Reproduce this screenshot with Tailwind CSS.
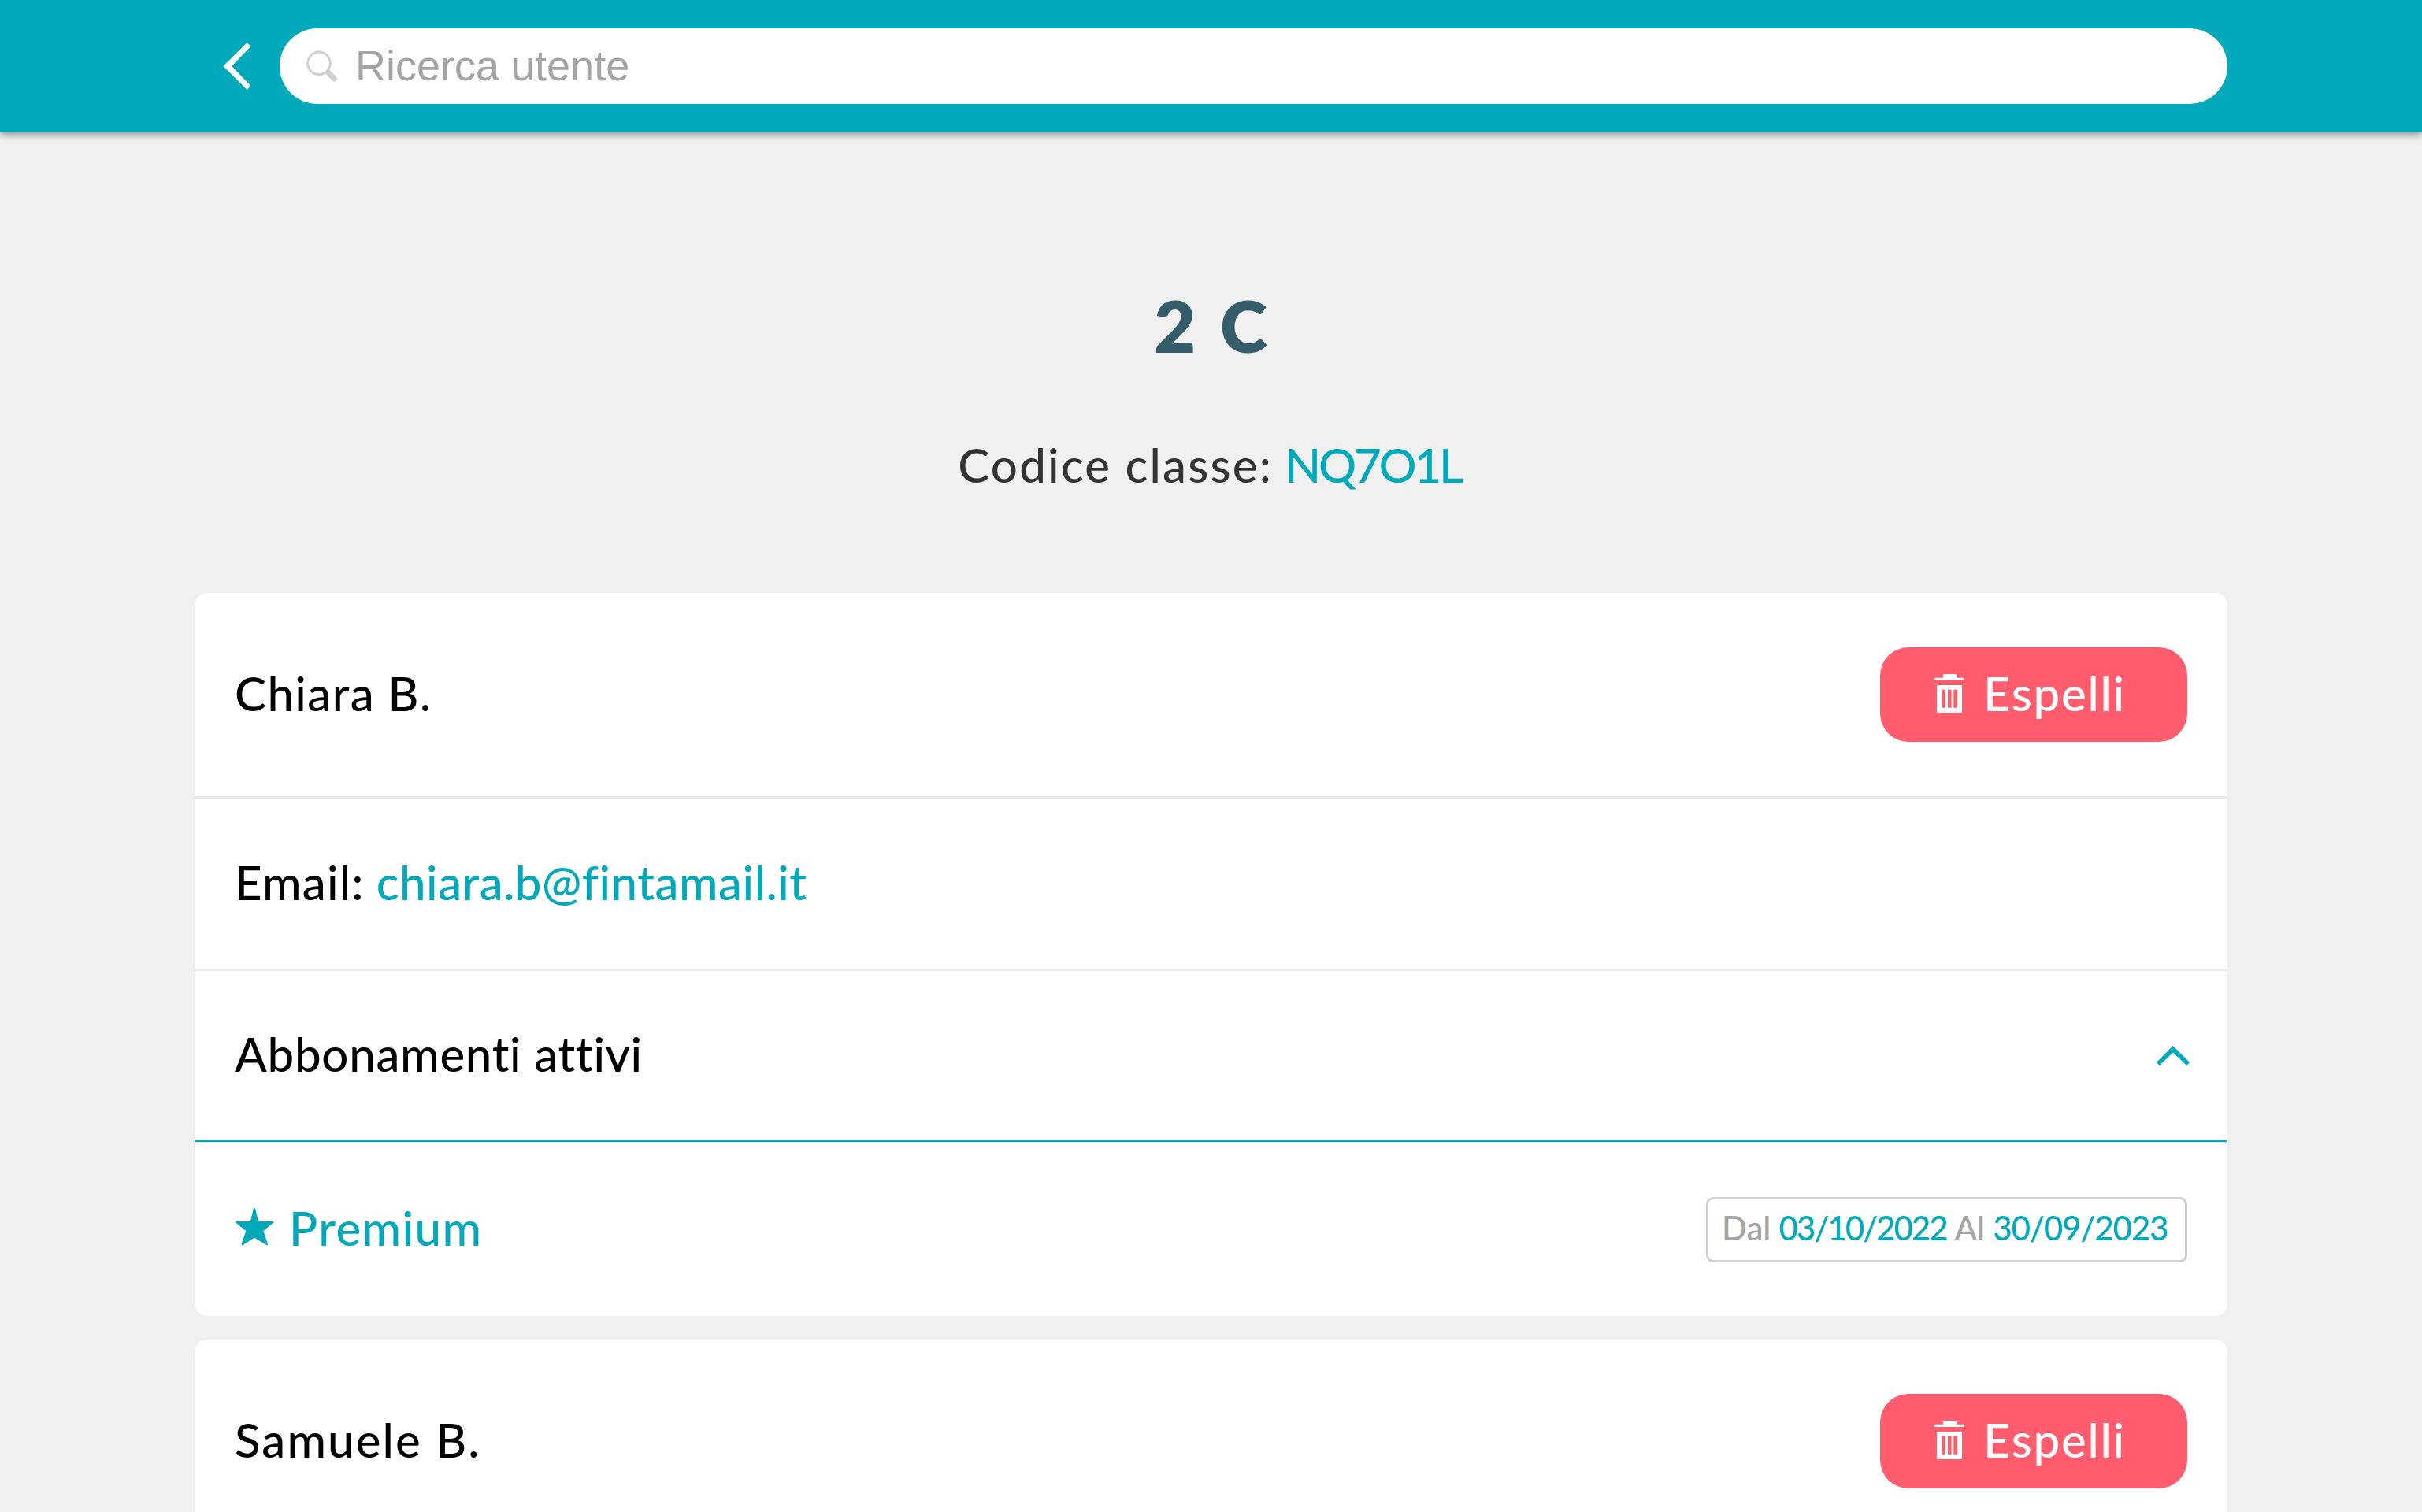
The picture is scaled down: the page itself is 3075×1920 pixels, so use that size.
<!DOCTYPE html>
<html lang="it">
<head>
  <meta charset="UTF-8" />
  <title>2 C - Gestione classe</title>
  <meta name="viewport" content="width=device-width, initial-scale=1.0" />
  <script src="https://cdn.jsdelivr.net/npm/@tailwindcss/browser@4"></script>
</head>
<body class="h-screen overflow-hidden bg-[#f0f0f0] text-black text-[60px] leading-[80px] font-medium font-['Lato',sans-serif] [font-variant-ligatures:none]">

<!-- Top bar -->
<header class="relative h-[168px] bg-[#01a9ba] shadow-[0_3px_9px_rgba(0,0,0,0.4)]">
  <div class="w-[2581px] h-full mx-auto pl-9 flex items-center gap-9">
    <a href="#" class="shrink-0" aria-label="Indietro">
      <svg class="w-9 h-[60px]" viewBox="0 0 108 180" fill="#fff"><path d="M92 0 106 15 34 90 106 165 92 180 1 90z" /></svg>
    </a>
    <label class="flex-1 h-24 rounded-full bg-white flex items-center gap-[22px] pl-[34px]">
      <svg class="w-10 h-10 shrink-0" viewBox="0 0 40 40" fill="none" stroke="#d0d0d0">
        <circle cx="16" cy="16.3" r="14.3" stroke-width="3" />
        <path d="M27.5 27.8 35.5 36" stroke-width="7" stroke-linecap="round" />
      </svg>
      <input type="text" placeholder="Ricerca utente" class="flex-1 h-full pb-[3px] font-normal font-['Liberation_Sans',sans-serif] text-[54px] leading-[62px] placeholder:text-[#a4a4a4] outline-none" />
    </label>
  </div>
</header>

<main class="w-[2581px] mx-auto pt-[195px]">
  <!-- Class title -->
  <h1 class="pl-1 text-center text-[91px] leading-[100px] font-extrabold tracking-[5px] text-[#355c6a]">2 C</h1>
  <p class="mt-[87px] mb-[123px] pr-1 text-center text-[#333]"><span class="tracking-[2.2px]">Codice classe:</span> <a href="#" class="tracking-[-3.2px] text-[#01a9ba]">NQ7O1L</a></p>

  <div class="flex flex-col gap-[30px]">
    <!-- Student card -->
    <section class="rounded-[16px] bg-white overflow-hidden">
      <div class="h-[258px] px-[51px] flex items-center justify-between">
        <span class="pb-1 tracking-[1.4px]">Chiara B.</span>
        <button class="w-[390px] h-[120px] pl-[69px] rounded-[36px] bg-[#ff5c6e] text-white flex items-center gap-6">
          <svg class="w-[38px] h-[49px] shrink-0 -mt-[3px]" viewBox="0 0 114 147" fill="currentColor" fill-rule="evenodd">
            <path d="M33 14V3q0-3 3-3h45q3 0 3 3v11h27q3 0 3 5t-3 5H3q-3 0-3-5t3-5z" />
            <path d="M9 42h96v102q0 3-3 3H12q-3 0-3-3zM28 59v69h14V59zM51 59v69h14V59zM73 59v69h14V59z" />
          </svg>
          <span class="pb-1 tracking-[1.7px]">Espelli</span>
        </button>
      </div>
      <div class="h-[219px] px-[51px] border-t-3 border-[#e7ecec] flex items-center">
        <p class="pb-1"><span class="tracking-[1.2px]">Email:</span> <a href="#" class="tracking-[0.5px] text-[#01a9ba]">chiara.b@fintamail.it</a></p>
      </div>
      <div class="h-[217px] px-[51px] border-t-3 border-[#e7ecec] flex items-center justify-between">
        <span class="pb-1 tracking-[0.7px]">Abbonamenti attivi</span>
        <svg class="w-[42px] h-[25px] -mr-[3px]" viewBox="0 0 125 74" fill="#01a9ba"><path d="M62 0 125 62 114 74 62 25 11 74 0 62z" /></svg>
      </div>
      <div class="h-1 bg-[#01a9ba] border-t border-t-[#9acdd1] border-b border-b-[#c3ebee]"></div>
      <div class="h-[220px] px-[51px] flex items-center justify-between">
        <div class="flex items-center gap-[18px] text-[#01a9ba]">
          <svg class="w-[50px] h-[48px] ml-px -mt-[7px]" viewBox="0 0 150 144" fill="currentColor"><path d="M72 0q3 0 4 4L87 51h55q6 2 2 5L106 87l17 50q0 6-5 4L72 113 27 142q-5 1-4-5L40 87 1 56q-3-4 2-5h54L68 4q1-4 4-4z" /></svg>
          <span class="pb-1 tracking-[1.4px]">Premium</span>
        </div>
        <div class="w-[611px] h-[83px] pl-[17px] rounded-[9px] border-3 border-[#d0d0d0] flex items-center gap-[10px] text-[42px] leading-[56px] text-[#a4a4a4]">
          <span class="pb-1">Dal</span>
          <span class="pb-1 text-[#01a9ba] tracking-[-2px]">03/10/2022</span>
          <span class="pb-1">Al</span>
          <span class="pb-1 text-[#01a9ba] tracking-[-1.1px]">30/09/2023</span>
        </div>
      </div>
    </section>

    <!-- Student card -->
    <section class="rounded-t-[16px] bg-white overflow-hidden">
      <div class="h-[258px] px-[51px] flex items-center justify-between">
        <span class="pb-1 tracking-[2.1px]">Samuele B.</span>
        <button class="w-[390px] h-[120px] pl-[69px] rounded-[36px] bg-[#ff5c6e] text-white flex items-center gap-6">
          <svg class="w-[38px] h-[49px] shrink-0 -mt-[3px]" viewBox="0 0 114 147" fill="currentColor" fill-rule="evenodd">
            <path d="M33 14V3q0-3 3-3h45q3 0 3 3v11h27q3 0 3 5t-3 5H3q-3 0-3-5t3-5z" />
            <path d="M9 42h96v102q0 3-3 3H12q-3 0-3-3zM28 59v69h14V59zM51 59v69h14V59zM73 59v69h14V59z" />
          </svg>
          <span class="pb-1 tracking-[1.7px]">Espelli</span>
        </button>
      </div>
    </section>
  </div>
</main>
</body>
</html>
